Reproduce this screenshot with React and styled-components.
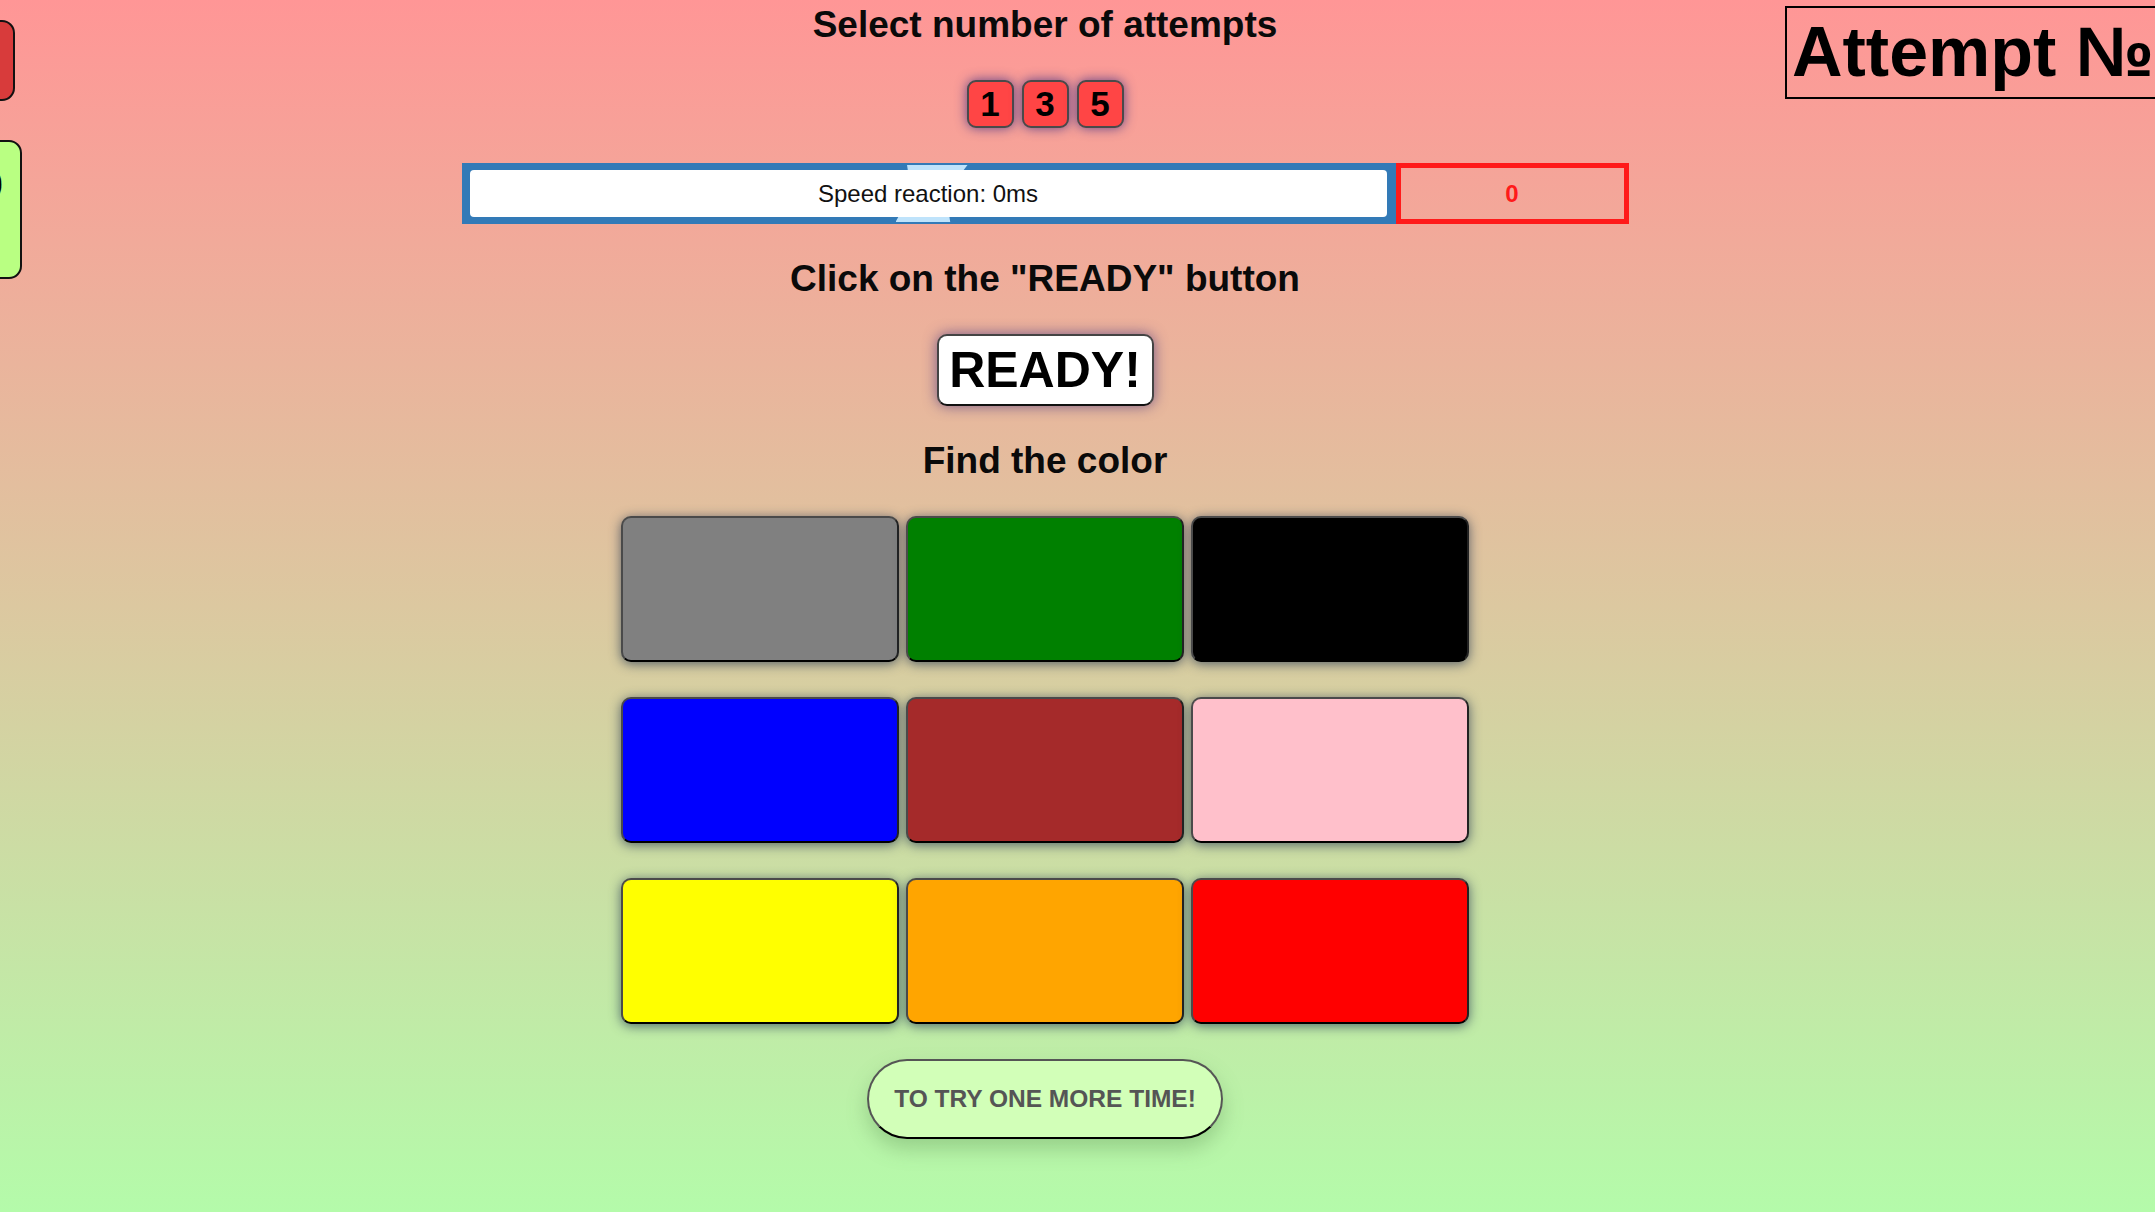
import React from 'react';
import styled, { createGlobalStyle } from 'styled-components';

const GlobalStyle = createGlobalStyle`
  html, body {
    margin: 0;
    padding: 0;
    overflow: hidden;
  }
  body {
    font-family: "Liberation Sans", Arial, sans-serif;
  }
`

const Page = styled.div`
  position: relative;
  width: 2155px;
  height: 1212px;
  padding-right: 65px;
  box-sizing: border-box;
  background: linear-gradient(180deg, #ff9696 0%, #dcc8a0 50%, #b4fbaa 100%);
  overflow: hidden;
`

const Main = styled.main`
  display: flex;
  flex-direction: column;
  align-items: center;
  gap: 35px;
  padding-top: 5px;
`

const Heading = styled.h2`
  margin: 0;
  font-size: 37px;
  line-height: 40px;
  font-weight: bold;
  color: #0a0a0a;
`

const AttemptsRow = styled.div`
  display: flex;
  gap: 8px;
`

const AttemptButton = styled.button`
  width: 47px;
  height: 48px;
  padding: 0;
  border: 2px solid #4a4a4a;
  border-radius: 9px;
  background: #ff4545;
  color: #000;
  font-family: inherit;
  font-size: 35px;
  font-weight: bold;
  box-shadow: 0 0 12px rgba(70, 50, 130, 0.85);
  cursor: pointer;
`

const SpeedRow = styled.div`
  display: flex;
  height: 61px;
`

const SpeedBar = styled.div`
  position: relative;
  display: flex;
  width: 934px;
  padding: 7px 9px 7px 8px;
  box-sizing: border-box;
  background: #337ab7;
`

const Thumb = styled.div`
  position: absolute;
  left: 434px;
  top: 2px;
  width: 72px;
  height: 57px;
  background: #bfe3fb;
  clip-path: polygon(16% 0, 100% 0, 70% 50%, 76% 100%, 0 100%, 22% 50%);
`

const SpeedInner = styled.div`
  position: relative;
  flex: 1;
  display: flex;
  align-items: center;
  justify-content: center;
  border-radius: 4px;
  background: #fff;
  font-size: 24px;
  color: #111;
`

const Score = styled.div`
  display: flex;
  align-items: center;
  justify-content: center;
  width: 233px;
  border: 5px solid #ff1a1a;
  box-sizing: border-box;
  color: #ff1a1a;
  font-size: 24px;
  font-weight: bold;
`

const ReadyButton = styled.button`
  width: 217px;
  height: 72px;
  padding: 0;
  border: 2px solid #444;
  border-bottom-color: #111;
  border-radius: 10px;
  background: #fff;
  color: #000;
  font-family: inherit;
  font-size: 50px;
  font-weight: bold;
  box-shadow: 0 0 14px rgba(80, 60, 130, 0.75);
  cursor: pointer;
`

const ColorGrid = styled.div`
  display: grid;
  grid-template-columns: repeat(3, 278px);
  grid-auto-rows: 146px;
  column-gap: 7px;
  row-gap: 35px;
`

const ColorCell = styled.div`
  border: 2px solid #4a4a4a;
  border-bottom-color: #000;
  border-right-color: #222;
  border-radius: 10px;
  background: ${p => p.$color};
  box-shadow: 0 2px 12px rgba(30, 50, 80, 0.7);
  cursor: pointer;
`

const RetryButton = styled.button`
  width: 356px;
  height: 80px;
  border: 2px solid #555;
  border-bottom-color: #000;
  border-radius: 40px;
  background: #d2ffb8;
  color: #555;
  font-family: inherit;
  font-size: 24.5px;
  font-weight: bold;
  text-transform: uppercase;
  box-shadow: 0 10px 20px rgba(90, 140, 80, 0.35);
  cursor: pointer;
`

const AttemptBox = styled.div`
  position: absolute;
  top: 6px;
  left: 1785px;
  padding: 5px 40px 5px 5px;
  border: 2px solid #000;
  font-size: 70px;
  line-height: 79px;
  font-weight: bold;
  color: #000;
  white-space: nowrap;
`

const SideTab = styled.div`
  position: absolute;
  left: -200px;
  top: ${p => p.$top}px;
  width: ${p => p.$width}px;
  height: ${p => p.$height}px;
  box-sizing: border-box;
  border: 2px solid #111;
  border-radius: 13px;
  background: ${p => p.$color};
  display: flex;
  justify-content: flex-end;
  align-items: flex-start;
  padding: 22px 17px 0 0;
  font-size: 38px;
  font-weight: bold;
  color: #000;
`

const colors = ['gray', 'green', 'black', 'blue', 'brown', 'pink', 'yellow', 'orange', 'red']

export default function App() {
  return (
    <>
      <GlobalStyle />
      <Page>
        <SideTab $top={20} $width={215} $height={81} $color="#d83b3b" />
        <SideTab $top={140} $width={222} $height={139} $color="#b9ff82">0</SideTab>

        <Main>
          <Heading>Select number of attempts</Heading>
          <AttemptsRow>
            <AttemptButton>1</AttemptButton>
            <AttemptButton>3</AttemptButton>
            <AttemptButton>5</AttemptButton>
          </AttemptsRow>

          <SpeedRow>
            <SpeedBar>
              <Thumb />
              <SpeedInner>Speed reaction: 0ms</SpeedInner>
            </SpeedBar>
            <Score>0</Score>
          </SpeedRow>

          <Heading>Click on the "READY" button</Heading>
          <ReadyButton>READY!</ReadyButton>

          <Heading>Find the color</Heading>
          <ColorGrid>
            {colors.map(c => (
              <ColorCell key={c} $color={c} />
            ))}
          </ColorGrid>

          <RetryButton>To try one more time!</RetryButton>
        </Main>

        <AttemptBox>Attempt №</AttemptBox>
      </Page>
    </>
  )
}
